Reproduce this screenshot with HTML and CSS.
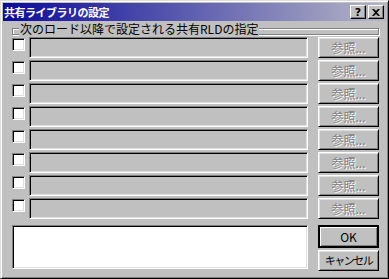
FILE: index.html
```html
<!DOCTYPE html>
<html lang="ja">
<head>
    <meta charset="UTF-8">
    <title>共有ライブラリの設定</title>
    <link rel="stylesheet" href="styles.css">
</head>
<body>
    <div class="window">
        <div class="titlebar">
            <span class="title">共有ライブラリの設定</span>
            <div class="title-btns">
                <button class="tbtn">?</button>
                <button class="tbtn">
                    <svg width="8" height="7" viewBox="0 0 8 7"><path d="M0 0h2l2 2 2-2h2L5 3.5 8 7H6L4 5 2 7H0l3-3.5z" fill="#000"/></svg>
                </button>
            </div>
        </div>
        <div class="content">
            <div class="group">
                <div class="group-line"></div>
                <span class="group-label">次のロード以降で設定される共有RLDの指定</span>
            </div>
            <div class="rows">
                <div class="row"><span class="check"></span><span class="field"></span><button class="btn" disabled>参照...</button></div>
                <div class="row"><span class="check"></span><span class="field"></span><button class="btn" disabled>参照...</button></div>
                <div class="row"><span class="check"></span><span class="field"></span><button class="btn" disabled>参照...</button></div>
                <div class="row"><span class="check"></span><span class="field"></span><button class="btn" disabled>参照...</button></div>
                <div class="row"><span class="check"></span><span class="field"></span><button class="btn" disabled>参照...</button></div>
                <div class="row"><span class="check"></span><span class="field"></span><button class="btn" disabled>参照...</button></div>
                <div class="row"><span class="check"></span><span class="field"></span><button class="btn" disabled>参照...</button></div>
                <div class="row"><span class="check"></span><span class="field"></span><button class="btn" disabled>参照...</button></div>
            </div>
            <div class="bottom">
                <div class="memo"></div>
                <div class="actions">
                    <button class="btn default">OK</button>
                    <button class="btn cancel">キャンセル</button>
                </div>
            </div>
        </div>
    </div>
</body>
</html>
```

FILE: styles.css
```css
body {
    margin: 0;
    font-family: "Noto Sans CJK JP", "DejaVu Sans", sans-serif;
    font-size: 12px;
    background: #c0c0c0;
}
.window {
    width: 389px;
    height: 279px;
    box-sizing: border-box;
    background: #c0c0c0;
    border: 1px solid;
    border-color: #dfdfdf #000 #000 #dfdfdf;
    box-shadow: inset 1px 1px #fff, inset -1px -1px #808080;
    padding: 2px;
    overflow: hidden;
}
.titlebar {
    height: 18px;
    display: flex;
    align-items: center;
    justify-content: space-between;
    background: linear-gradient(90deg, #0a0a9c, #b6b6c6);
    padding: 0 2px 0 1px;
}
.title {
    color: #fff;
    font-weight: bold;
    font-size: 11px;
    letter-spacing: -0.5px;
    line-height: 14px;
}
.title-btns {
    display: flex;
    gap: 2px;
}
.tbtn {
    width: 16px;
    height: 14px;
    padding: 0;
    margin: 0;
    box-sizing: border-box;
    background: #c0c0c0;
    border: 1px solid;
    border-color: #fff #000 #000 #fff;
    box-shadow: inset -1px -1px #808080;
    font-family: "DejaVu Sans", sans-serif;
    font-weight: bold;
    font-size: 11px;
    line-height: 11px;
    display: flex;
    align-items: center;
    justify-content: center;
}
.content {
    padding: 1px 7px 0 9px;
}
.group {
    position: relative;
    height: 14px;
}
.group-line {
    position: absolute;
    left: 0;
    right: 0;
    top: 6px;
    height: 7px;
    box-sizing: border-box;
    border: 1px solid #808080;
    box-shadow: inset 1px 1px #fff, 1px 1px #fff;
}
.group-label {
    position: absolute;
    left: 7px;
    top: 0;
    padding: 0 1px;
    background: #c0c0c0;
    line-height: 14px;
    color: #000;
}
.rows {
    margin-top: 1px;
    display: flex;
    flex-direction: column;
    gap: 2px;
}
.row {
    display: flex;
    align-items: flex-start;
    height: 21px;
}
.check {
    width: 13px;
    height: 13px;
    margin-top: 1px;
    box-sizing: border-box;
    background: #fff;
    border: 1px solid;
    border-color: #808080 #fff #fff #808080;
    box-shadow: inset 1px 1px #000, inset -1px -1px #dfdfdf;
}
.field {
    width: 279px;
    height: 21px;
    margin-left: 4px;
    box-sizing: border-box;
    background: #c0c0c0;
    border: 1px solid;
    border-color: #808080 #fff #fff #808080;
    box-shadow: inset 1px 1px #000, inset -1px -1px #dfdfdf;
}
.btn {
    width: 61px;
    height: 21px;
    margin: 0 0 0 10px;
    padding: 0;
    box-sizing: border-box;
    background: #c0c0c0;
    border: 1px solid;
    border-color: #fff #000 #000 #fff;
    box-shadow: inset 1px 1px #dfdfdf, inset -1px -1px #808080;
    font-family: inherit;
    font-size: 12px;
    color: #000;
    line-height: 17px;
    white-space: nowrap;
}
.btn:disabled {
    color: #808080;
    text-shadow: 1px 1px #fff;
}
.bottom {
    display: flex;
    align-items: flex-start;
    margin-top: 6px;
}
.memo {
    width: 296px;
    height: 44px;
    box-sizing: border-box;
    background: #fff;
    border: 1px solid;
    border-color: #808080 #fff #fff #808080;
    box-shadow: inset 1px 1px #000, inset -1px -1px #dfdfdf;
}
.actions {
    display: flex;
    flex-direction: column;
    gap: 2px;
}
.actions .btn {
    margin-left: 10px;
}
.btn.cancel {
    font-size: 11px;
    letter-spacing: -1.5px;
}
.btn.default {
    height: 23px;
    border: 2px solid;
    border-color: #000;
    box-shadow: inset 1px 1px #fff, inset -1px -1px #808080;
}
```
